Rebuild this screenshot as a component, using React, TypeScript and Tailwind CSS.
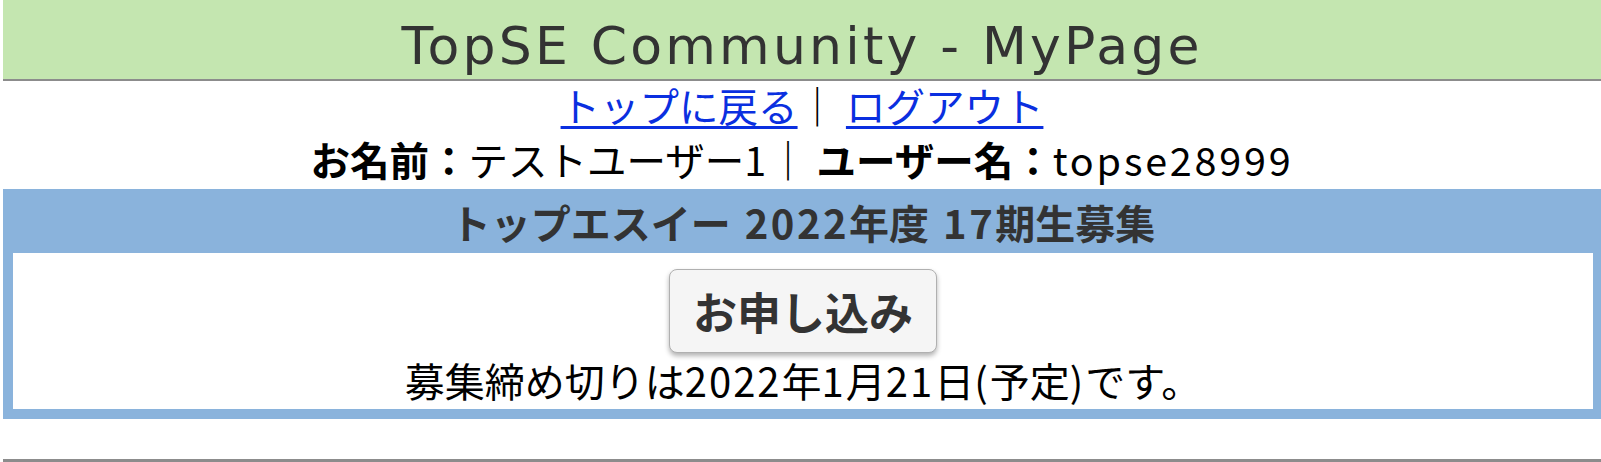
import React from "react";

const jp = { fontFamily: '"Noto Sans CJK JP", "Noto Sans", sans-serif' };

export default function App() {
  return (
    <div className="w-full overflow-hidden bg-white pl-[3px]" style={jp}>
      <div className="flex h-[81px] items-center justify-center border-b-2 border-[#8c8c8c] bg-[#c4e6b0]">
        <h1
          className="pt-[12px] text-[52px] leading-none tracking-[3.2px] text-[#333333]"
          style={{ fontFamily: '"DejaVu Sans", Verdana, sans-serif' }}
        >
          TopSE Community - MyPage
        </h1>
      </div>

      <div className="text-center text-[39.5px] leading-[48px] text-black">
        <a href="#" className="text-[#0a2fe0] underline underline-offset-[4px]">
          トップに戻る
        </a>
        <span>｜ </span>
        <a href="#" className="text-[#0a2fe0] underline underline-offset-[4px]">
          ログアウト
        </a>
      </div>

      <div className="text-center text-[39.5px] leading-[60px] text-black">
        <span className="font-bold">お名前：</span>
        <span>テストユーザー</span>
        <span className="tracking-[2px]">1</span>
        <span>｜ </span>
        <span className="font-bold">ユーザー名：</span>
        <span className="tracking-[2.8px]">topse28999</span>
      </div>

      <div className="bg-[#8ab3dc] pb-[10px] pl-[10px] pr-[8px]">
        <div className="flex h-[64px] items-center justify-center pt-[2px] text-[40px] font-bold text-[#333333]">
          <span>トップエスイー</span>
          <span className="ml-[14px] tracking-[2.5px]">2022</span>
          <span>年度</span>
          <span className="ml-[14px] tracking-[2.5px]">17</span>
          <span>期生募集</span>
        </div>
        <div className="flex h-[156px] flex-col items-center bg-white">
          <button className="mt-[16px] h-[84px] rounded-[8px] border-[1.5px] border-[#b0b0b0] bg-[#f5f5f5] px-[23px] text-[44px] font-bold text-[#333333] shadow-[0_3px_5px_rgba(0,0,0,0.3)]">
            お申し込み
          </button>
          <div className="flex h-[54px] items-center text-[40px] text-black">
            <span>募集締め切りは</span>
            <span className="tracking-[2px]">2022</span>
            <span>年</span>
            <span className="tracking-[2px]">1</span>
            <span>月</span>
            <span className="tracking-[2px]">21</span>
            <span>日</span>
            <span className="tracking-[2px]">(</span>
            <span>予定</span>
            <span className="tracking-[2px]">)</span>
            <span>です。</span>
          </div>
        </div>
      </div>

      <div className="h-[40px]" />
      <div className="h-[3px] bg-[#8c8c8c]" />
    </div>
  );
}
